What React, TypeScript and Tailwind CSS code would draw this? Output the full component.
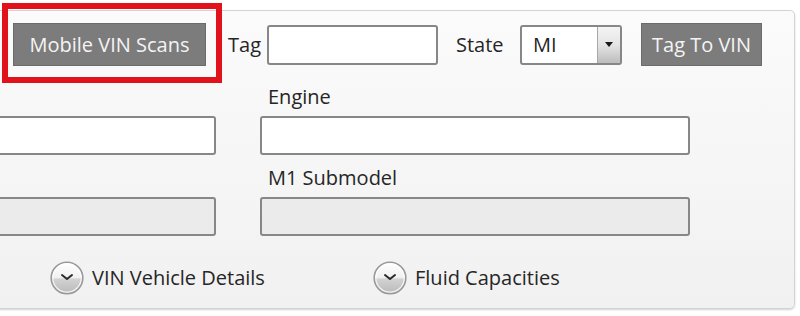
const font = { fontFamily: '"Open Sans", "Noto Sans", sans-serif' };

const ExpandIcon = ({ id }: { id: string }) => (
  <svg width="34" height="34" viewBox="0 0 34 34">
    <defs>
      <linearGradient id={id} x1="0" y1="0" x2="0" y2="1">
        <stop offset="0" stopColor="#ffffff" />
        <stop offset="0.48" stopColor="#f1f1f1" />
        <stop offset="0.54" stopColor="#d2d2d2" />
        <stop offset="1" stopColor="#b9b9b9" />
      </linearGradient>
    </defs>
    <circle cx="17" cy="17" r="15.8" fill={`url(#${id})`} stroke="#999999" strokeWidth="1.6" />
    <circle cx="17" cy="17" r="14.2" fill="none" stroke="#ffffff" strokeOpacity="0.8" strokeWidth="1.2" />
    <path d="M12 14 L17 18 L22 14" fill="none" stroke="#2a2a2a" strokeWidth="2" strokeLinecap="round" strokeLinejoin="round" />
  </svg>
);

export default function App() {
  return (
    <div className="relative w-[800px] h-[316px] bg-white overflow-hidden text-[20px] text-[#262626]" style={font}>
      <div className="mt-[10px] -ml-[40px] mr-[5px] h-[299px] border border-[#d3d3d3] rounded-[5px] bg-gradient-to-b from-[#fbfbfb] to-[#f1f1f1] shadow-[0_1px_2px_rgba(0,0,0,0.18)]">
        {/* top row */}
        <div className="mt-[12px] flex items-center h-[43px] pl-[52px]">
          <button className="w-[193px] h-[43px] bg-[#7c7c7c] border border-[#6b6b6b] text-[#f4f4f4] leading-none">
            Mobile VIN Scans
          </button>
          <span className="ml-[22px] w-[39px] leading-[24px]">Tag</span>
          <div className="w-[171px] h-[40px] bg-white border-2 border-[#878787] rounded-[3px]" />
          <span className="ml-[18px] w-[64px] leading-[24px]">State</span>
          <div className="w-[102px] h-[40px] flex bg-white border-2 border-[#878787] rounded-[3px] overflow-hidden">
            <span className="flex-1 pl-[11px] leading-[36px] text-[#1f1f1f]">MI</span>
            <div className="w-[23px] flex items-center justify-center border-l border-[#a8a8a8] bg-gradient-to-b from-[#f4f4f4] via-[#e4e4e4] to-[#bdbdbd]">
              <svg width="8" height="5" viewBox="0 0 8 5">
                <path d="M0 0 L8 0 L4 5 Z" fill="#1a1a1a" />
              </svg>
            </div>
          </div>
          <button className="ml-[19px] w-[121px] h-[43px] bg-[#7c7c7c] border border-[#6b6b6b] text-[#f4f4f4] leading-none">
            Tag To VIN
          </button>
        </div>

        {/* engine row */}
        <div className="flex mt-[19px] pl-[19px] gap-[44px]">
          <div className="w-[236px] flex flex-col">
            <div className="h-[24px]" />
            <div className="mt-[7px] h-[39px] bg-white border-2 border-[#878787] rounded-[3px]" />
          </div>
          <div className="w-[430px] flex flex-col">
            <span className="pl-[8px] leading-[24px] h-[24px]">Engine</span>
            <div className="mt-[7px] h-[39px] bg-white border-2 border-[#878787] rounded-[3px]" />
          </div>
        </div>

        {/* submodel row */}
        <div className="flex mt-[11px] pl-[19px] gap-[44px]">
          <div className="w-[236px] flex flex-col">
            <div className="h-[24px]" />
            <div className="mt-[7px] h-[39px] bg-[#ebebeb] border-2 border-[#878787] rounded-[3px]" />
          </div>
          <div className="w-[430px] flex flex-col">
            <span className="pl-[8px] leading-[24px] h-[24px]">M1 Submodel</span>
            <div className="mt-[7px] h-[39px] bg-[#ebebeb] border-2 border-[#878787] rounded-[3px]" />
          </div>
        </div>

        {/* expanders */}
        <div className="flex items-center mt-[25px] h-[34px] pl-[89px]">
          <div className="w-[323px] flex items-center gap-[8px]">
            <ExpandIcon id="g1" />
            <span className="leading-[24px]">VIN Vehicle Details</span>
          </div>
          <div className="flex items-center gap-[8px]">
            <ExpandIcon id="g2" />
            <span className="leading-[24px]">Fluid Capacities</span>
          </div>
        </div>
      </div>

      {/* red highlight annotation */}
      <div className="absolute left-[2px] top-[3px] w-[220px] h-[80px] border-[6px] border-[#e2121c]" />
    </div>
  );
}
